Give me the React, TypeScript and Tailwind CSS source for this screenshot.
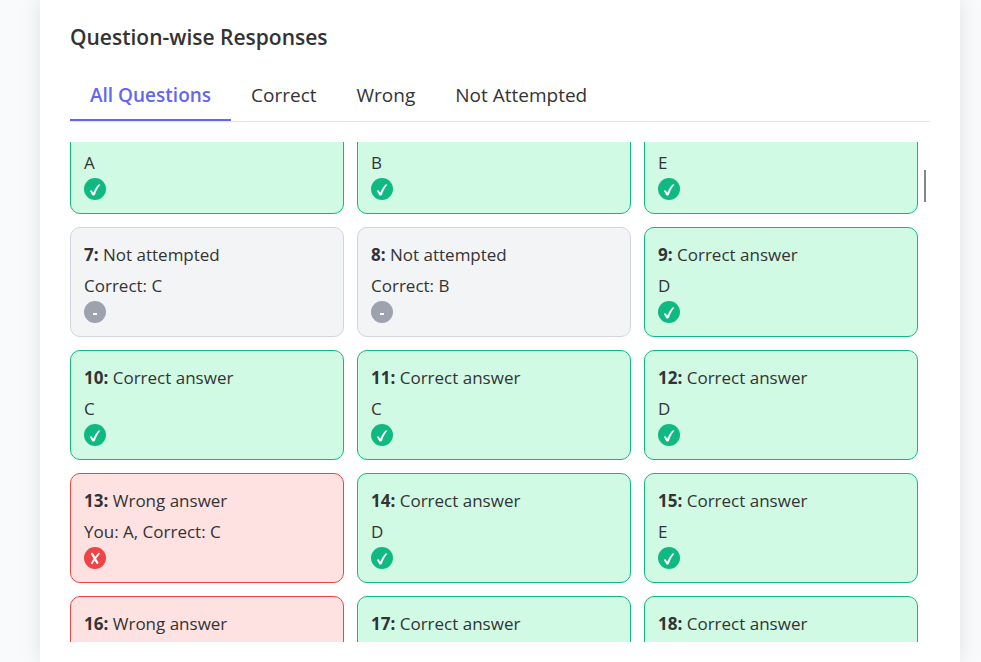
import { useLayoutEffect, useRef, useState } from "react";

type Status = "correct" | "wrong" | "skipped";

interface Question {
  id: number;
  status: Status;
  answer: string;
  given?: string;
}

const questions: Question[] = [
  { id: 4, status: "correct", answer: "A" },
  { id: 5, status: "correct", answer: "B" },
  { id: 6, status: "correct", answer: "E" },
  { id: 7, status: "skipped", answer: "C" },
  { id: 8, status: "skipped", answer: "B" },
  { id: 9, status: "correct", answer: "D" },
  { id: 10, status: "correct", answer: "C" },
  { id: 11, status: "correct", answer: "C" },
  { id: 12, status: "correct", answer: "D" },
  { id: 13, status: "wrong", answer: "C", given: "A" },
  { id: 14, status: "correct", answer: "D" },
  { id: 15, status: "correct", answer: "E" },
  { id: 16, status: "wrong", answer: "B", given: "D" },
  { id: 17, status: "correct", answer: "A" },
  { id: 18, status: "correct", answer: "C" },
];

const cardStyle: Record<Status, string> = {
  correct: "border-[#10b981] bg-[#d1fae5]",
  wrong: "border-[#ef4444] bg-[#fee2e2]",
  skipped: "border-[#d1d5db] bg-[#f3f4f6]",
};

const badgeStyle: Record<Status, string> = {
  correct: "bg-[#10b981]",
  wrong: "bg-[#ef4444]",
  skipped: "bg-[#9ca3af]",
};

const title: Record<Status, string> = {
  correct: "Correct answer",
  wrong: "Wrong answer",
  skipped: "Not attempted",
};

const tabs: { label: string; status?: Status }[] = [
  { label: "All Questions" },
  { label: "Correct", status: "correct" },
  { label: "Wrong", status: "wrong" },
  { label: "Not Attempted", status: "skipped" },
];

function detail(q: Question) {
  if (q.status === "correct") return q.answer;
  if (q.status === "wrong") return `You: ${q.given}, Correct: ${q.answer}`;
  return `Correct: ${q.answer}`;
}

function Badge({ status }: { status: Status }) {
  return (
    <span className={`block size-[22px] rounded-full ${badgeStyle[status]}`}>
      <svg viewBox="0 0 22 22" className="size-full" aria-hidden="true">
        {status === "correct" && (
          <path
            d="M5.9 13.100c.5-.8 1.500-1 2-.3l1.300 2c1.300-3 3-5.900 4.800-7.900.6-.5 1.600-.6 2.400-.3-2.300 2.900-4 6-5.400 9.900-.4 1-2.200 1.500-2.800.5z"
            fill="#fff"
          />
        )}
        {status === "wrong" && (
          <g fill="none" stroke="#fff" strokeLinecap="round">
            <path d="M8.100 7c1.500 2 3.200 5.700 5.300 8.900" strokeWidth="2.200" />
            <path d="M14.900 6.600c-2.300 2.800-5 6-7 9.700" strokeWidth="1.800" />
          </g>
        )}
        {status === "skipped" && <path d="M9 12h4v2H9z" fill="#fff" />}
      </svg>
    </span>
  );
}

function Card({ question }: { question: Question }) {
  return (
    <li
      className={`rounded-[10px] border p-[13px] text-[17px] leading-7 ${cardStyle[question.status]}`}
    >
      <p className="mb-[3px]">
        <strong className="font-bold">{question.id}:</strong> {title[question.status]}
      </p>
      <p className="mb-px">{detail(question)}</p>
      <Badge status={question.status} />
    </li>
  );
}

export default function App() {
  const [active, setActive] = useState(0);
  const list = useRef<HTMLUListElement>(null);

  useLayoutEffect(() => {
    if (list.current) list.current.scrollTop = 38;
  }, []);

  const wanted = tabs[active].status;
  const shown = questions.filter((q) => !wanted || q.status === wanted);

  return (
    <div className="min-h-screen bg-[#f8fafc] pr-[21px] pl-10 font-['Open_Sans','Noto_Sans',sans-serif] text-[#333]">
      <main className="min-h-screen bg-white px-[30px] pt-5 pb-5 shadow-[0_0_20px_rgba(0,0,0,0.1)]">
        <h2 className="text-[21px] leading-[34px] font-semibold">Question-wise Responses</h2>
        <div role="tablist" className="mt-4 flex border-b border-[#e5e7eb]">
          {tabs.map((tab, i) => (
            <button
              key={tab.label}
              type="button"
              role="tab"
              aria-selected={i === active}
              onClick={() => setActive(i)}
              className={`border-b-2 px-5 pt-[9px] pb-2 text-[19px] leading-8 ${
                i === active ? "border-[#6366f1] font-semibold text-[#6366f1]" : "border-transparent"
              }`}
            >
              {tab.label}
            </button>
          ))}
        </div>
        <div className="relative mt-5">
          <ul
            ref={list}
            className="grid h-[500px] grid-cols-3 content-start gap-[13px] overflow-y-auto pr-3 [scrollbar-width:none]"
          >
            {shown.map((q) => (
              <Card key={q.id} question={q} />
            ))}
          </ul>
          <div className="absolute top-7 right-1 h-8 w-0.5 bg-[#858585]" />
        </div>
      </main>
    </div>
  );
}
